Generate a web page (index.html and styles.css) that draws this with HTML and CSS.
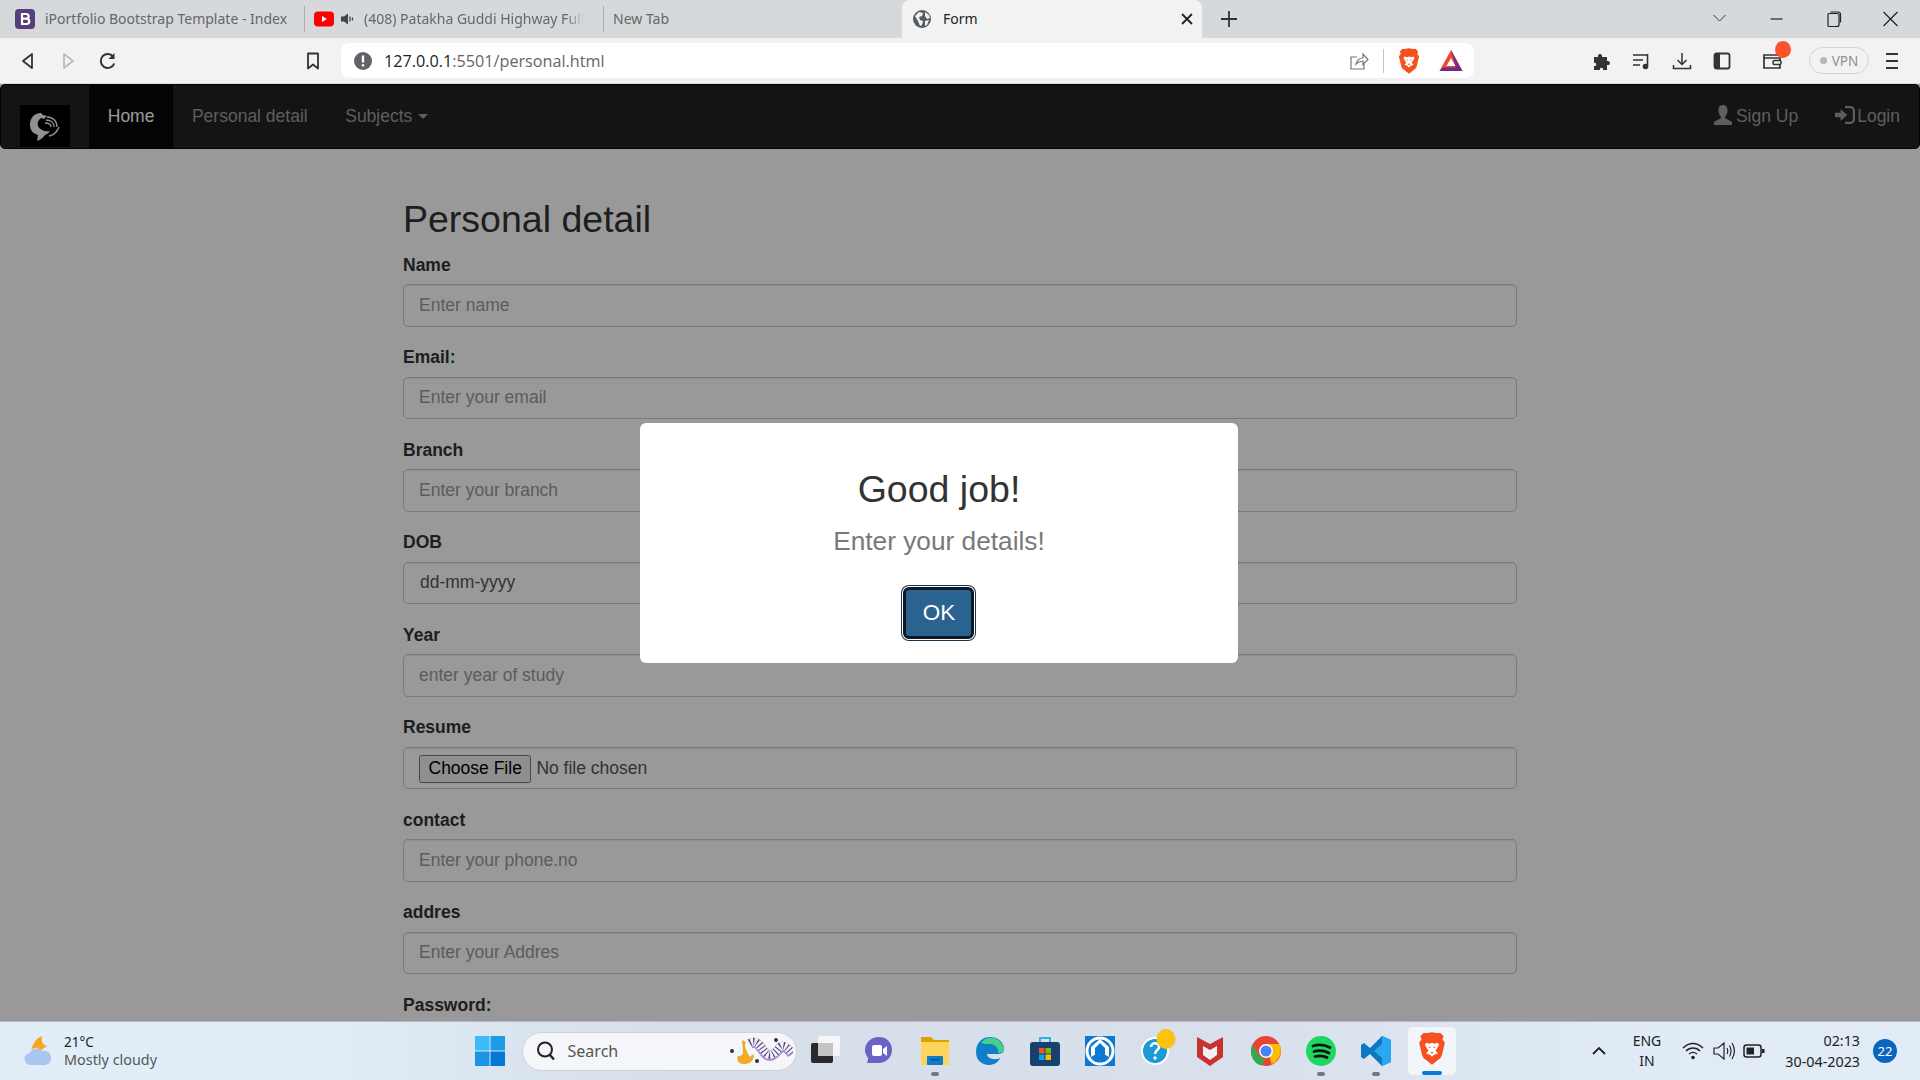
FILE: index.html
```html
<!DOCTYPE html>
<html>
<head>
    <title>Form</title>
    <link rel="stylesheet" href="styles.css">
</head>
<body>
    <svg class="defs" width="0" height="0">
        <symbol id="brave" viewBox="0 0 24 28">
            <path fill="#f4511e" d="M12 0l5 1 2-.5 3 3-1 2.500 2 3-2.500 10.500c-.5 2-1.500 3-3 4L12 28l-5.500-4.500c-1.500-1-2.500-2-3-4L1 9l2-3-1-2.500 3-3 2 .5z"/>
            <path fill="#fff" d="M7 9l3 1 2-1 2 1 3-1 1 2-3 5 2 2-3.500 1.500L12 21l-1.500-1.500L7 18l2-2-3-5z"/>
            <path fill="#f4511e" d="M9 12.500h2l-1 1.500zM13 12.500h2l-1 1.500zM10.500 17h3L12 18.500z"/>
        </symbol>
    </svg>

    <!-- Tab strip -->
    <div class="tabstrip">
        <div class="tab tab-first">
            <svg class="favicon" viewBox="0 0 20 20"><rect width="20" height="20" rx="4" fill="#563d7c"/><path fill="none" stroke="#fff" stroke-width="2.200" d="M7 5h4c3.500 0 3.500 4.700 0 4.700H7h4.500c3.700 0 3.700 5.300 0 5.300H7z"/></svg>
            <span class="tab-title">iPortfolio Bootstrap Template - Index</span>
        </div>
        <div class="tab tab-yt">
            <svg class="favicon" viewBox="0 0 20 20"><rect y="2.500" width="20" height="15" rx="4" fill="#f00"/><path fill="#fff" d="M8 7l5 3-5 3z"/></svg>
            <svg class="audio" viewBox="0 0 14 14"><path fill="#444" d="M1 4.500h3L8 1.500v11l-4-3H1z"/><path stroke="#444" fill="none" stroke-width="1.300" d="M10 4.500v5M12.500 5.500v3"/></svg>
            <span class="tab-title tab-fade">(408) Patakha Guddi Highway Full</span>
        </div>
        <div class="tab tab-new"><span class="tab-title">New Tab</span></div>
        <div class="tab tab-active">
            <svg class="favicon" viewBox="0 0 20 20"><circle cx="10" cy="10" r="9" fill="#555b61"/><path fill="#f2f2f2" d="M3 7l4-4 4 1-1 3-3 1 1 3 3 1-1 4-2 1-2-5zM13 3l4 3 1 3-3 1-2-3zM13 12l4-1-2 5-2 1z"/></svg>
            <span class="tab-title">Form</span>
            <svg class="tab-close" viewBox="0 0 12 12"><path stroke="#222" stroke-width="1.800" d="M1 1l10 10M11 1L1 11"/></svg>
        </div>
        <svg class="new-tab" viewBox="0 0 16 16"><path stroke="#333" stroke-width="1.800" d="M8 0v16M0 8h16"/></svg>
        <div class="win-controls">
            <svg class="win-btn" viewBox="0 0 56 20"><path fill="none" stroke="#333" d="M22 6l6 6 6-6"/></svg>
            <svg class="win-btn" viewBox="0 0 56 20"><path stroke="#222" stroke-width="1.200" d="M22 10h12"/></svg>
            <svg class="win-btn" viewBox="0 0 56 20"><path fill="none" stroke="#222" stroke-width="1.200" d="M23.500 4.500h8a2 2 0 012 2v9a2 2 0 01-2 2h-8a1 1 0 01-1-1v-11a1 1 0 011-1zM25 3h7.500a2.500 2.500 0 012.500 2.500v8"/></svg>
            <svg class="win-btn" viewBox="0 0 56 20"><path stroke="#222" stroke-width="1.200" d="M21 3l14 14M35 3L21 17"/></svg>
        </div>
    </div>

    <!-- Toolbar -->
    <div class="toolbar">
        <div class="tool"><svg viewBox="0 0 20 20"><path fill="none" stroke="#333" stroke-width="1.800" stroke-linejoin="round" d="M14 3v14L5 10z"/></svg></div>
        <div class="tool"><svg viewBox="0 0 20 20"><path fill="none" stroke="#bbb" stroke-width="1.800" stroke-linejoin="round" d="M6 3v14l9-7z"/></svg></div>
        <div class="tool"><svg viewBox="0 0 20 20"><path fill="none" stroke="#333" stroke-width="2" d="M15.500 6a7 7 0 10.800 6.500"/><path fill="#333" d="M16.500 2v6h-6z"/></svg></div>
        <div class="tool tool-bookmark"><svg viewBox="0 0 20 20"><path fill="none" stroke="#333" stroke-width="1.800" stroke-linejoin="round" d="M5 2.500h10v15l-5-4-5 4z"/></svg></div>
        <div class="addressbar">
            <svg class="info" viewBox="0 0 18 18"><circle cx="9" cy="9" r="9" fill="#5f6368"/><path stroke="#fff" stroke-width="2.400" d="M9 3.500v7M9 12.200v2.400"/></svg>
            <span class="url"><span class="url-host">127.0.0.1</span>:5501/personal.html</span>
            <svg class="share" viewBox="0 0 20 20"><path fill="none" stroke="#777" stroke-width="1.200" d="M8 6H2v12h13v-5M7 13c1-4 4-6 7-6V3l5 5.500-5 5V10c-3 0-5 1-7 3z"/></svg>
            <span class="addr-sep"></span>
            <svg class="addr-brave"><use href="#brave"/></svg>
            <svg class="bat" viewBox="0 0 24 24"><path fill="#ee4a2b" d="M12 1L23.500 22H.5z"/><path fill="#7f2a80" d="M12 1l11.500 21h-6z"/><path fill="#6b2d8c" d="M.5 22l3-3.500h17l3 3.500z"/><path fill="#fff" d="M12 9l4.500 8h-9z"/></svg>
        </div>
        <div class="tool tool-puzzle"><svg viewBox="0 0 20 20"><path fill="#333" d="M2 6h4c-1-4 5-4 4 0h5v4c4-1 4 5 0 4v5h-4c1-3-4-3-3 0H2v-4c3 1 3-4 0-3z"/></svg></div>
        <div class="tool"><svg viewBox="0 0 20 20"><path stroke="#333" stroke-width="1.600" fill="none" d="M1 4h14M1 9h10M1 14h7M15.500 3v12"/><circle cx="13.500" cy="15.500" r="2.800" fill="#333"/></svg></div>
        <div class="tool"><svg viewBox="0 0 20 20"><path fill="none" stroke="#333" stroke-width="1.500" d="M10 2v11M5.500 9l4.500 4.500L14.500 9M1.500 14v3.500h17V14"/></svg></div>
        <div class="tool"><svg viewBox="0 0 20 20"><rect x="2.500" y="2.500" width="15" height="15" rx="2" fill="none" stroke="#333" stroke-width="1.800"/><rect x="2.500" y="2.500" width="5.500" height="15" fill="#333"/></svg></div>
        <div class="tool tool-wallet">
            <svg viewBox="0 0 20 20"><path fill="none" stroke="#333" stroke-width="1.700" d="M18 6V4H2v13h16v-4M2 7h16v3"/><rect x="11" y="9.500" width="8" height="4" rx="1.500" fill="none" stroke="#333" stroke-width="1.500"/></svg>
            <span class="wallet-dot"></span>
        </div>
        <div class="vpn"><span class="vpn-dot"></span>VPN</div>
        <div class="tool tool-menu"><svg viewBox="0 0 20 20"><path stroke="#333" stroke-width="1.800" d="M4 3h12M4 10h12M4 17h12"/></svg></div>
    </div>

    <!-- Page -->
    <div class="page">
        <nav class="navbar">
            <div class="brand">
                <svg class="logo" viewBox="0 0 50 42">
                    <path fill="#f2f2f2" d="M21 8c-7 0-11 5-11 12 0 6 4 9 8 10l-1 6c3-1 6-3 8-6 2-1 4-2 5-4-5 1-10-1-12-5-1-3 0-6 3-8l3 1 3-3-4-1z"/>
                    <path fill="none" stroke="#f2f2f2" stroke-width="1.300" d="M27 12c6 0 10 4 10 10M26 15c5 0 8 3 8 7M25 18c4 0 6 2 6 4M33 29c3-1 5-4 6-7M29 31c4-1 7-3 8-6"/>
                </svg>
            </div>
            <a class="nav-link nav-active">Home</a>
            <a class="nav-link">Personal detail</a>
            <a class="nav-link">Subjects <span class="caret"></span></a>
            <div class="nav-right">
                <a class="nav-link nav-icon">
                    <svg viewBox="0 0 18 18"><path fill="#9d9d9d" d="M9 0c3 0 4.500 2.500 4 6-.3 2-1.200 3.500-2 4.300v1.700l6 3v3H1v-3l6-3v-1.700C6.200 9.500 5.300 8 5 6 4.500 2.500 6 0 9 0z"/></svg>
                    Sign Up
                </a>
                <a class="nav-link nav-icon nav-login">
                    <svg viewBox="0 0 18 18"><path fill="#9d9d9d" d="M0 7h5V3.500L11 9l-6 5.500V11H0z"/><path fill="none" stroke="#9d9d9d" stroke-width="2" d="M9 2h5a3 3 0 013 3v8a3 3 0 01-3 3H9"/></svg>
                    Login
                </a>
            </div>
        </nav>

        <div class="container">
            <h2 class="title">Personal detail</h2>
            <form>
                <div class="form-group">
                    <label>Name</label>
                    <input class="form-control" type="text" placeholder="Enter name">
                </div>
                <div class="form-group">
                    <label>Email:</label>
                    <input class="form-control" type="text" placeholder="Enter your email">
                </div>
                <div class="form-group">
                    <label>Branch</label>
                    <input class="form-control" type="text" placeholder="Enter your branch">
                </div>
                <div class="form-group">
                    <label>DOB</label>
                    <input class="form-control form-date" type="text" value="dd-mm-yyyy">
                </div>
                <div class="form-group">
                    <label>Year</label>
                    <input class="form-control" type="text" placeholder="enter year of study">
                </div>
                <div class="form-group">
                    <label>Resume</label>
                    <input class="form-control" type="file">
                </div>
                <div class="form-group">
                    <label>contact</label>
                    <input class="form-control" type="text" placeholder="Enter your phone.no">
                </div>
                <div class="form-group">
                    <label>addres</label>
                    <input class="form-control" type="text" placeholder="Enter your Addres">
                </div>
                <div class="form-group">
                    <label>Password:</label>
                    <input class="form-control" type="password">
                </div>
            </form>
        </div>

        <!-- Alert -->
        <div class="overlay">
            <div class="modal">
                <h2 class="modal-title">Good job!</h2>
                <div class="modal-text">Enter your details!</div>
                <button class="modal-ok" type="button">OK</button>
            </div>
        </div>
    </div>

    <!-- Taskbar -->
    <div class="taskbar">
        <div class="weather">
            <svg class="weather-icon" viewBox="0 0 32 32">
                <path fill="#f5a623" d="M18 1c-3 3-4 7-2 11l-9 2c3-6 5-11 11-13z"/>
                <path fill="#f5a623" d="M18 1c-1 6 1 9 5 10l-7 5c-5-4-3-12 2-15z"/>
                <path fill="#a9c6ee" d="M7 30a6 6 0 01-1-12c1-5 9-6 12-2 5-1 9 2 9 7s-3 7-7 7z"/>
            </svg>
            <div class="weather-text">
                <div class="weather-temp">21°C</div>
                <div class="weather-desc">Mostly cloudy</div>
            </div>
        </div>

        <div class="apps">
            <div class="app">
                <svg viewBox="0 0 30 30"><rect width="14.500" height="14.500" fill="#3cbcf6"/><rect x="15.500" width="14.500" height="14.500" fill="#1c9be8"/><rect y="15.500" width="14.500" height="14.500" fill="#1a94e4"/><rect x="15.500" y="15.500" width="14.500" height="14.500" fill="#0478d4"/></svg>
            </div>
            <div class="search">
                <svg class="search-icon" viewBox="0 0 20 20"><circle cx="9" cy="8.500" r="7" fill="none" stroke="#222" stroke-width="2"/><path stroke="#222" stroke-width="2.400" d="M13.500 13.500l4.500 5"/></svg>
                <span class="search-label">Search</span>
                <svg class="search-art" viewBox="0 0 64 36">
                    <path fill="none" stroke="#a78fd0" stroke-width="10" d="M21 11c7-4 10 3 15 9s10 1 14-4 9 0 13 5"/>
                    <path fill="none" stroke="#f4f0fb" stroke-width="8" d="M21 10c7-4 10 3 15 9s10 1 14-4 9 0 13 5"/>
                    <path fill="none" stroke="#4a3a70" stroke-width="8" stroke-dasharray="1 2.500" d="M21 10c7-4 10 3 15 9s10 1 14-4 9 0 13 5"/>
                    <path fill="#f0aa2c" d="M13 7l4 2-1 2c0 4 2 9 5 13l3-3 1 2c-1 6-5 8-10 8-5 0-8-3-6-8 3 0 5-1 5-4z"/>
                    <circle cx="3" cy="18" r="2" fill="#333"/><circle cx="28" cy="28" r="2" fill="#333"/><circle cx="47" cy="7" r="2" fill="#333"/>
                </svg>
            </div>
            <div class="app">
                <svg viewBox="-2 0 30 30"><rect x="7" y="0" width="22" height="20" rx="2" fill="#f6f6f6"/><rect y="7" width="22" height="20" rx="2" fill="#2a2a2a"/><rect x="7" y="7" width="15" height="13" fill="#c4c4c4"/></svg>
            </div>
            <div class="app">
                <svg viewBox="0 0 30 30"><path fill="#6a62c4" d="M15 1c8 0 13 6 13 13s-6 13-13 13H3c1-2 1-4 1-5-2-3-3-5-3-8C1 7 7 1 15 1z"/><rect x="8" y="9" width="10" height="11" rx="2" fill="#fff"/><path fill="#fff" d="M19 13l4-3v10l-4-3z"/></svg>
            </div>
            <div class="app app-dot">
                <svg viewBox="0 0 30 30"><path fill="#e0a100" d="M1 1h10l3 3h15v6H1z"/><rect x="1" y="6" width="28" height="23" fill="#fcd65c"/><rect x="7" y="20" width="16" height="9" rx="1" fill="#0f7cc8"/><rect x="11" y="23" width="8" height="1.500" fill="#0b4f85"/></svg>
            </div>
            <div class="app">
                <svg viewBox="0 0 30 30"><path fill="#0f7fc9" d="M1 16C1 7 7 1 15 1c8 0 14 5 14 12 0 4-3 5-7 5H12c0 4 7 7 13 4-2 5-7 7-11 7-7 0-13-5-13-13z"/><path fill="#45d08a" d="M6 7c5-8 19-7 23 5 0 4-3 5-6 5 1-5-3-9-8-9-4 0-6 0-9-1z"/></svg>
            </div>
            <div class="app">
                <svg viewBox="0 0 30 30"><path fill="none" stroke="#2db4ee" stroke-width="2" d="M10 7V2h10v5"/><rect y="6" width="30" height="24" rx="3" fill="#17416f"/><rect x="9" y="12" width="5.500" height="5.500" fill="#f25022"/><rect x="15.500" y="12" width="5.500" height="5.500" fill="#7fba00"/><rect x="9" y="18.500" width="5.500" height="5.500" fill="#00a4ef"/><rect x="15.500" y="18.500" width="5.500" height="5.500" fill="#ffb900"/></svg>
            </div>
            <div class="app">
                <svg viewBox="0 0 30 30"><rect width="30" height="30" fill="#0c78d0"/><circle cx="15" cy="15" r="13" fill="none" stroke="#fff" stroke-width="3"/><path fill="#fff" d="M15 3L6 11v10l9-5 9 5V11z"/><path fill="#0c78d0" d="M15 7l-5 5v14l5-4 5 4V12z"/></svg>
            </div>
            <div class="app">
                <svg viewBox="0 0 30 30"><circle cx="15" cy="15" r="14" fill="#fff"/><circle cx="15" cy="15" r="12" fill="#1b9ad6"/><path fill="none" stroke="#fff" stroke-width="2.600" d="M11 11c0-5 8-5 8 0 0 3-4 3-4 7"/><circle cx="15" cy="22" r="1.700" fill="#fff"/><ellipse cx="26" cy="3" rx="9.500" ry="10" fill="#fdc20f"/></svg>
            </div>
            <div class="app">
                <svg viewBox="0 0 30 30"><path fill="#c8322f" d="M2 1l13 7 13-7v20L15 30 2 21z"/><path fill="#eef2f7" d="M8 10l7 4 7-4v9l-7 5-7-5z"/></svg>
            </div>
            <div class="app">
                <svg viewBox="0 0 30 30"><circle cx="15" cy="15" r="15" fill="#ea4335"/><path fill="#fbbc05" d="M15 8h13.500a15 15 0 01-8 20z"/><path fill="#34a853" d="M1.500 8.500L9 21l6 2-5 6.500C4 27.500 0 22 0 15c0-2.500.5-4.500 1.500-6.500z"/><circle cx="15" cy="15" r="7" fill="#fff"/><circle cx="15" cy="15" r="5.500" fill="#4285f4"/></svg>
            </div>
            <div class="app app-dot">
                <svg viewBox="0 0 30 30"><circle cx="15" cy="15" r="15" fill="#1ed760"/><path fill="none" stroke="#111" stroke-width="2.800" stroke-linecap="round" d="M7 10c6-2 12-1 17 1.500M8 15.500c5-1.500 10-1 15 1.500M9 20.500c4-1 9-.8 12 1"/></svg>
            </div>
            <div class="app app-dot">
                <svg viewBox="0 0 30 30"><path fill="#0a79c2" d="M21 0l9 4v22l-9 4L9 18l-6 5-3-2v-12l3-2 6 5z"/><path fill="#2aa7ee" d="M21 0l9 4v22l-9 4zM21 8l-8 7 8 7z"/></svg>
            </div>
            <div class="app app-active">
                <svg class="app-brave"><use href="#brave"/></svg>
            </div>
        </div>

        <div class="tray">
            <svg class="tray-chevron" viewBox="0 0 14 10"><path fill="none" stroke="#222" stroke-width="1.800" d="M1 8l6-6 6 6"/></svg>
            <div class="lang">ENG<br>IN</div>
            <svg class="tray-icon" viewBox="0 0 22 20"><path fill="none" stroke="#222" stroke-width="1.400" d="M1 7c6-6 14-6 20 0M4 10c4-4 10-4 14 0M7 13c2.500-2 5.500-2 8 0"/><circle cx="11" cy="16.500" r="1.800" fill="#222"/></svg>
            <svg class="tray-icon" viewBox="0 0 22 20"><path fill="none" stroke="#222" stroke-width="1.200" d="M1 7h4l6-5v16l-6-5H1zM14 7c1 2 1 4 0 6M16.500 4.500c2 3 2 8 0 11M19 2c3 5 3 11 0 16"/></svg>
            <svg class="tray-icon" viewBox="0 0 22 20"><rect x="1" y="4" width="17" height="12" rx="2.500" fill="none" stroke="#222" stroke-width="1.500"/><rect x="3.500" y="6.500" width="7.500" height="7" fill="#222"/><rect x="19" y="8" width="2.500" height="4" fill="#222"/></svg>
            <div class="clock">
                <div>02:13</div>
                <div>30-04-2023</div>
            </div>
            <div class="notif">22</div>
        </div>
    </div>
</body>
</html>
```

FILE: styles.css
```css
* {
    box-sizing: border-box;
}
html, body {
    height: 100%;
}
body {
    margin: 0;
    display: flex;
    flex-direction: column;
    height: 1080px;
    overflow: hidden;
    font-family: "Liberation Sans", Arial, sans-serif;
    color: #333;
    background-color: #fff;
}
.defs {
    display: none;
}

/* Tab strip */
.tabstrip {
    display: flex;
    align-items: stretch;
    height: 38px;
    flex-shrink: 0;
    background-color: #d5d9dc;
    font-family: "Noto Sans", sans-serif;
    font-size: 14px;
    color: #666;
}
.tab {
    display: flex;
    align-items: center;
    width: 299px;
    padding-left: 15px;
    position: relative;
    white-space: nowrap;
    overflow: hidden;
}
.tab-first {
    width: 305px;
}
.tab-first::after, .tab-yt::after {
    content: "";
    position: absolute;
    right: 0;
    top: 6px;
    bottom: 6px;
    width: 1px;
    background-color: #a9adb1;
}
.tab-yt {
    padding-left: 9px;
}
.tab-new {
    padding-left: 9px;
    width: 298px;
}
.tab-title {
    margin-top: -1px;
}
.tab-first .tab-title {
    margin-left: 10px;
}
.tab-fade {
    margin-left: 10px;
    -webkit-mask-image: linear-gradient(to right, #000 92%, transparent);
    mask-image: linear-gradient(to right, #000 92%, transparent);
}
.favicon {
    width: 20px;
    height: 20px;
    flex-shrink: 0;
}
.audio {
    width: 14px;
    height: 14px;
    margin-left: 6px;
    flex-shrink: 0;
}
.tab-active {
    width: 300px;
    padding-left: 10px;
    background-color: #f2f2f2;
    border-radius: 8px 8px 0 0;
    color: #222;
}
.tab-active .tab-title {
    margin-left: 11px;
    flex: 1;
}
.tab-close {
    width: 12px;
    height: 12px;
    margin-right: 9px;
}
.new-tab {
    width: 16px;
    height: 16px;
    margin: 11px 0 0 19px;
}
.win-controls {
    display: flex;
    align-items: center;
    margin-left: auto;
    margin-right: 1px;
}
.win-btn {
    width: 57px;
    height: 20px;
}

/* Toolbar */
.toolbar {
    display: flex;
    align-items: center;
    height: 46px;
    flex-shrink: 0;
    padding-left: 8px;
    background-color: #f2f2f2;
    border-bottom: 1px solid #e0e0e0;
}
.tool {
    position: relative;
    display: flex;
    align-items: center;
    justify-content: center;
    width: 40px;
    height: 40px;
}
.tool svg {
    width: 20px;
    height: 20px;
}
.tool-bookmark {
    margin-left: 165px;
}
.addressbar {
    display: flex;
    align-items: center;
    width: 1133px;
    height: 35px;
    margin-left: 8px;
    padding-left: 13px;
    background-color: #fff;
    border-radius: 8px;
}
.info {
    width: 18px;
    height: 18px;
}
.url {
    margin-left: 12px;
    flex: 1;
    font-family: "Open Sans", sans-serif;
    font-size: 16.200px;
    color: #666;
}
.url-host {
    color: #222;
}
.share {
    width: 20px;
    height: 20px;
}
.addr-sep {
    width: 1px;
    height: 24px;
    margin-left: 14px;
    background-color: #c4c4c4;
}
.addr-brave {
    width: 22px;
    height: 26px;
    margin-left: 14px;
}
.bat {
    width: 24px;
    height: 24px;
    margin: 0 11px 0 19px;
}
.tool-puzzle {
    margin-left: 108px;
}
.tool-wallet {
    margin-left: 10px;
}
.wallet-dot {
    position: absolute;
    top: 0;
    right: 1px;
    width: 16px;
    height: 17px;
    border-radius: 50%;
    background-color: #fb542b;
}
.vpn {
    display: flex;
    align-items: center;
    justify-content: center;
    gap: 5px;
    width: 60px;
    height: 27px;
    margin-left: 17px;
    border: 1px solid #d4d4d8;
    border-radius: 14px;
    font-family: "Noto Sans", sans-serif;
    font-size: 13.500px;
    color: #8a8f9c;
}
.vpn-dot {
    width: 7px;
    height: 7px;
    border-radius: 50%;
    background-color: #b3b6c4;
}
.tool-menu {
    margin-left: 3px;
}

/* Page */
.page {
    position: relative;
    flex: 1;
    min-height: 0;
    overflow: hidden;
    font-size: 17.500px;
    line-height: 25px;
    background-color: #fff;
}
.navbar {
    display: flex;
    height: 65px;
    background-color: #222;
    border: 1px solid #080808;
    border-radius: 5px;
}
.brand {
    display: flex;
    align-items: flex-end;
    width: 88px;
    padding: 0 0 1px 19px;
}
.logo {
    width: 50px;
    height: 42px;
    background-color: #000;
}
.nav-link {
    display: flex;
    align-items: center;
    gap: 5px;
    padding: 0 18.750px;
    color: #9d9d9d;
}
.nav-active {
    background-color: #080808;
    color: #fff;
}
.caret {
    width: 0;
    height: 0;
    margin-left: 1px;
    border-top: 5px solid #9d9d9d;
    border-left: 5px solid transparent;
    border-right: 5px solid transparent;
}
.nav-right {
    display: flex;
    margin-left: auto;
}
.nav-icon {
    gap: 3px;
    padding: 0;
    margin-right: 37px;
}
.nav-icon svg {
    width: 20px;
    height: 20px;
    margin-top: -3px;
}
.nav-login {
    gap: 2px;
    margin-right: 19px;
}
.container {
    width: 1114px;
    margin: 0 auto;
    padding-top: 50px;
}
.title {
    margin: 0 0 12.500px;
    font-size: 37.500px;
    font-weight: 500;
    line-height: 41.250px;
}
.form-group {
    margin-bottom: 18.750px;
}
.form-group label {
    display: block;
    margin-bottom: 6.250px;
    font-weight: 700;
}
.form-control {
    display: block;
    width: 100%;
    height: 42.500px;
    padding: 7.500px 15px;
    border: 1px solid #ccc;
    border-radius: 5px;
    font-family: inherit;
    font-size: 17.500px;
    color: #555;
    background-color: #fff;
    box-shadow: inset 0 1px 1px rgba(0, 0, 0, 0.075);
}
.form-control::placeholder {
    color: #999;
}
.form-control::file-selector-button {
    padding: 1.250px 7.500px;
    margin-right: 5px;
}
.form-date {
    padding-left: 16px;
}

/* Alert */
.overlay {
    position: absolute;
    inset: 0;
    background-color: rgba(0, 0, 0, 0.4);
}
.modal {
    position: absolute;
    left: 640px;
    top: 339px;
    display: flex;
    flex-direction: column;
    align-items: center;
    width: 598px;
    height: 240px;
    padding-top: 44px;
    background-color: #fff;
    border-radius: 6px;
}
.modal-title {
    margin: 0;
    font-size: 37.500px;
    font-weight: 500;
    line-height: 44px;
    color: #333;
}
.modal-text {
    margin-top: 15px;
    font-size: 26.250px;
    line-height: 30px;
    color: #797979;
}
.modal-ok {
    width: 71px;
    height: 52px;
    margin: 31px 2px 0 0;
    padding: 0 0 0 2px;
    background-color: #2a6390;
    border: 3px solid #0b1a26;
    border-radius: 6px;
    box-shadow: 0 0 0 1px #fff, 0 0 0 2px #17344c;
    font-family: inherit;
    font-size: 22.500px;
    color: #fff;
}

/* Taskbar */
.taskbar {
    display: grid;
    grid-template-columns: 1fr auto 1fr;
    align-items: center;
    height: 59px;
    flex-shrink: 0;
    border-top: 1px solid #b4b9c2;
    background: linear-gradient(to right, #e1eef8 0%, #e1eef8 15%, #d6deea 35%, #d8e0ec 65%, #e0ebf6 85%, #e1ecf7 100%);
    font-family: "Noto Sans", sans-serif;
    color: #222;
}
.weather {
    display: flex;
    align-items: center;
    padding-left: 24px;
    line-height: 18px;
}
.weather-icon {
    width: 32px;
    height: 32px;
    margin-right: 8px;
}
.weather-temp {
    font-size: 13.500px;
}
.weather-desc {
    font-size: 14.400px;
    color: #555;
}
.apps {
    display: flex;
    align-items: center;
    padding-right: 2px;
}
.app {
    position: relative;
    display: flex;
    align-items: center;
    justify-content: center;
    width: 55.200px;
    height: 48px;
}
.app svg {
    width: 30px;
    height: 30px;
    overflow: visible;
}
.app-dot::after {
    content: "";
    position: absolute;
    left: 50%;
    bottom: -1px;
    width: 8px;
    height: 4px;
    margin-left: -4px;
    border-radius: 2px;
    background-color: #777;
}
.app-active {
    width: 48px;
    margin-left: 4px;
    background-color: #f2f5f9;
    border-radius: 5px;
}
.app-active::after {
    content: "";
    position: absolute;
    left: 14px;
    bottom: 0;
    width: 20px;
    height: 4px;
    border-radius: 2px;
    background-color: #0a78d6;
}
.app .app-brave {
    width: 28px;
    height: 33px;
    margin-bottom: 6px;
}
.search {
    display: flex;
    align-items: center;
    width: 275px;
    height: 39px;
    margin-left: 4px;
    padding-left: 13px;
    background-color: #f4f6fa;
    border: 1px solid #cdd1d9;
    border-radius: 20px;
}
.search-icon {
    width: 20px;
    height: 20px;
}
.search-label {
    margin-left: 12px;
    font-size: 16px;
    color: #555;
}
.search-art {
    width: 64px;
    height: 36px;
    margin-left: auto;
    margin-right: 3px;
}
.tray {
    display: flex;
    align-items: center;
    justify-self: end;
}
.tray-chevron {
    width: 14px;
    height: 10px;
}
.lang {
    width: 40px;
    margin: 0 15px 0 21px;
    font-size: 14px;
    line-height: 20px;
    text-align: center;
}
.tray-icon {
    width: 22px;
    height: 20px;
    margin-right: 8.500px;
}
.clock {
    width: 86.500px;
    font-size: 14.300px;
    line-height: 21px;
    text-align: right;
}
.notif {
    width: 24px;
    height: 24px;
    margin: 0 23px 0 13px;
    border-radius: 50%;
    background-color: #0a64c0;
    font-size: 13px;
    line-height: 24px;
    text-align: center;
    color: #fff;
}
```
